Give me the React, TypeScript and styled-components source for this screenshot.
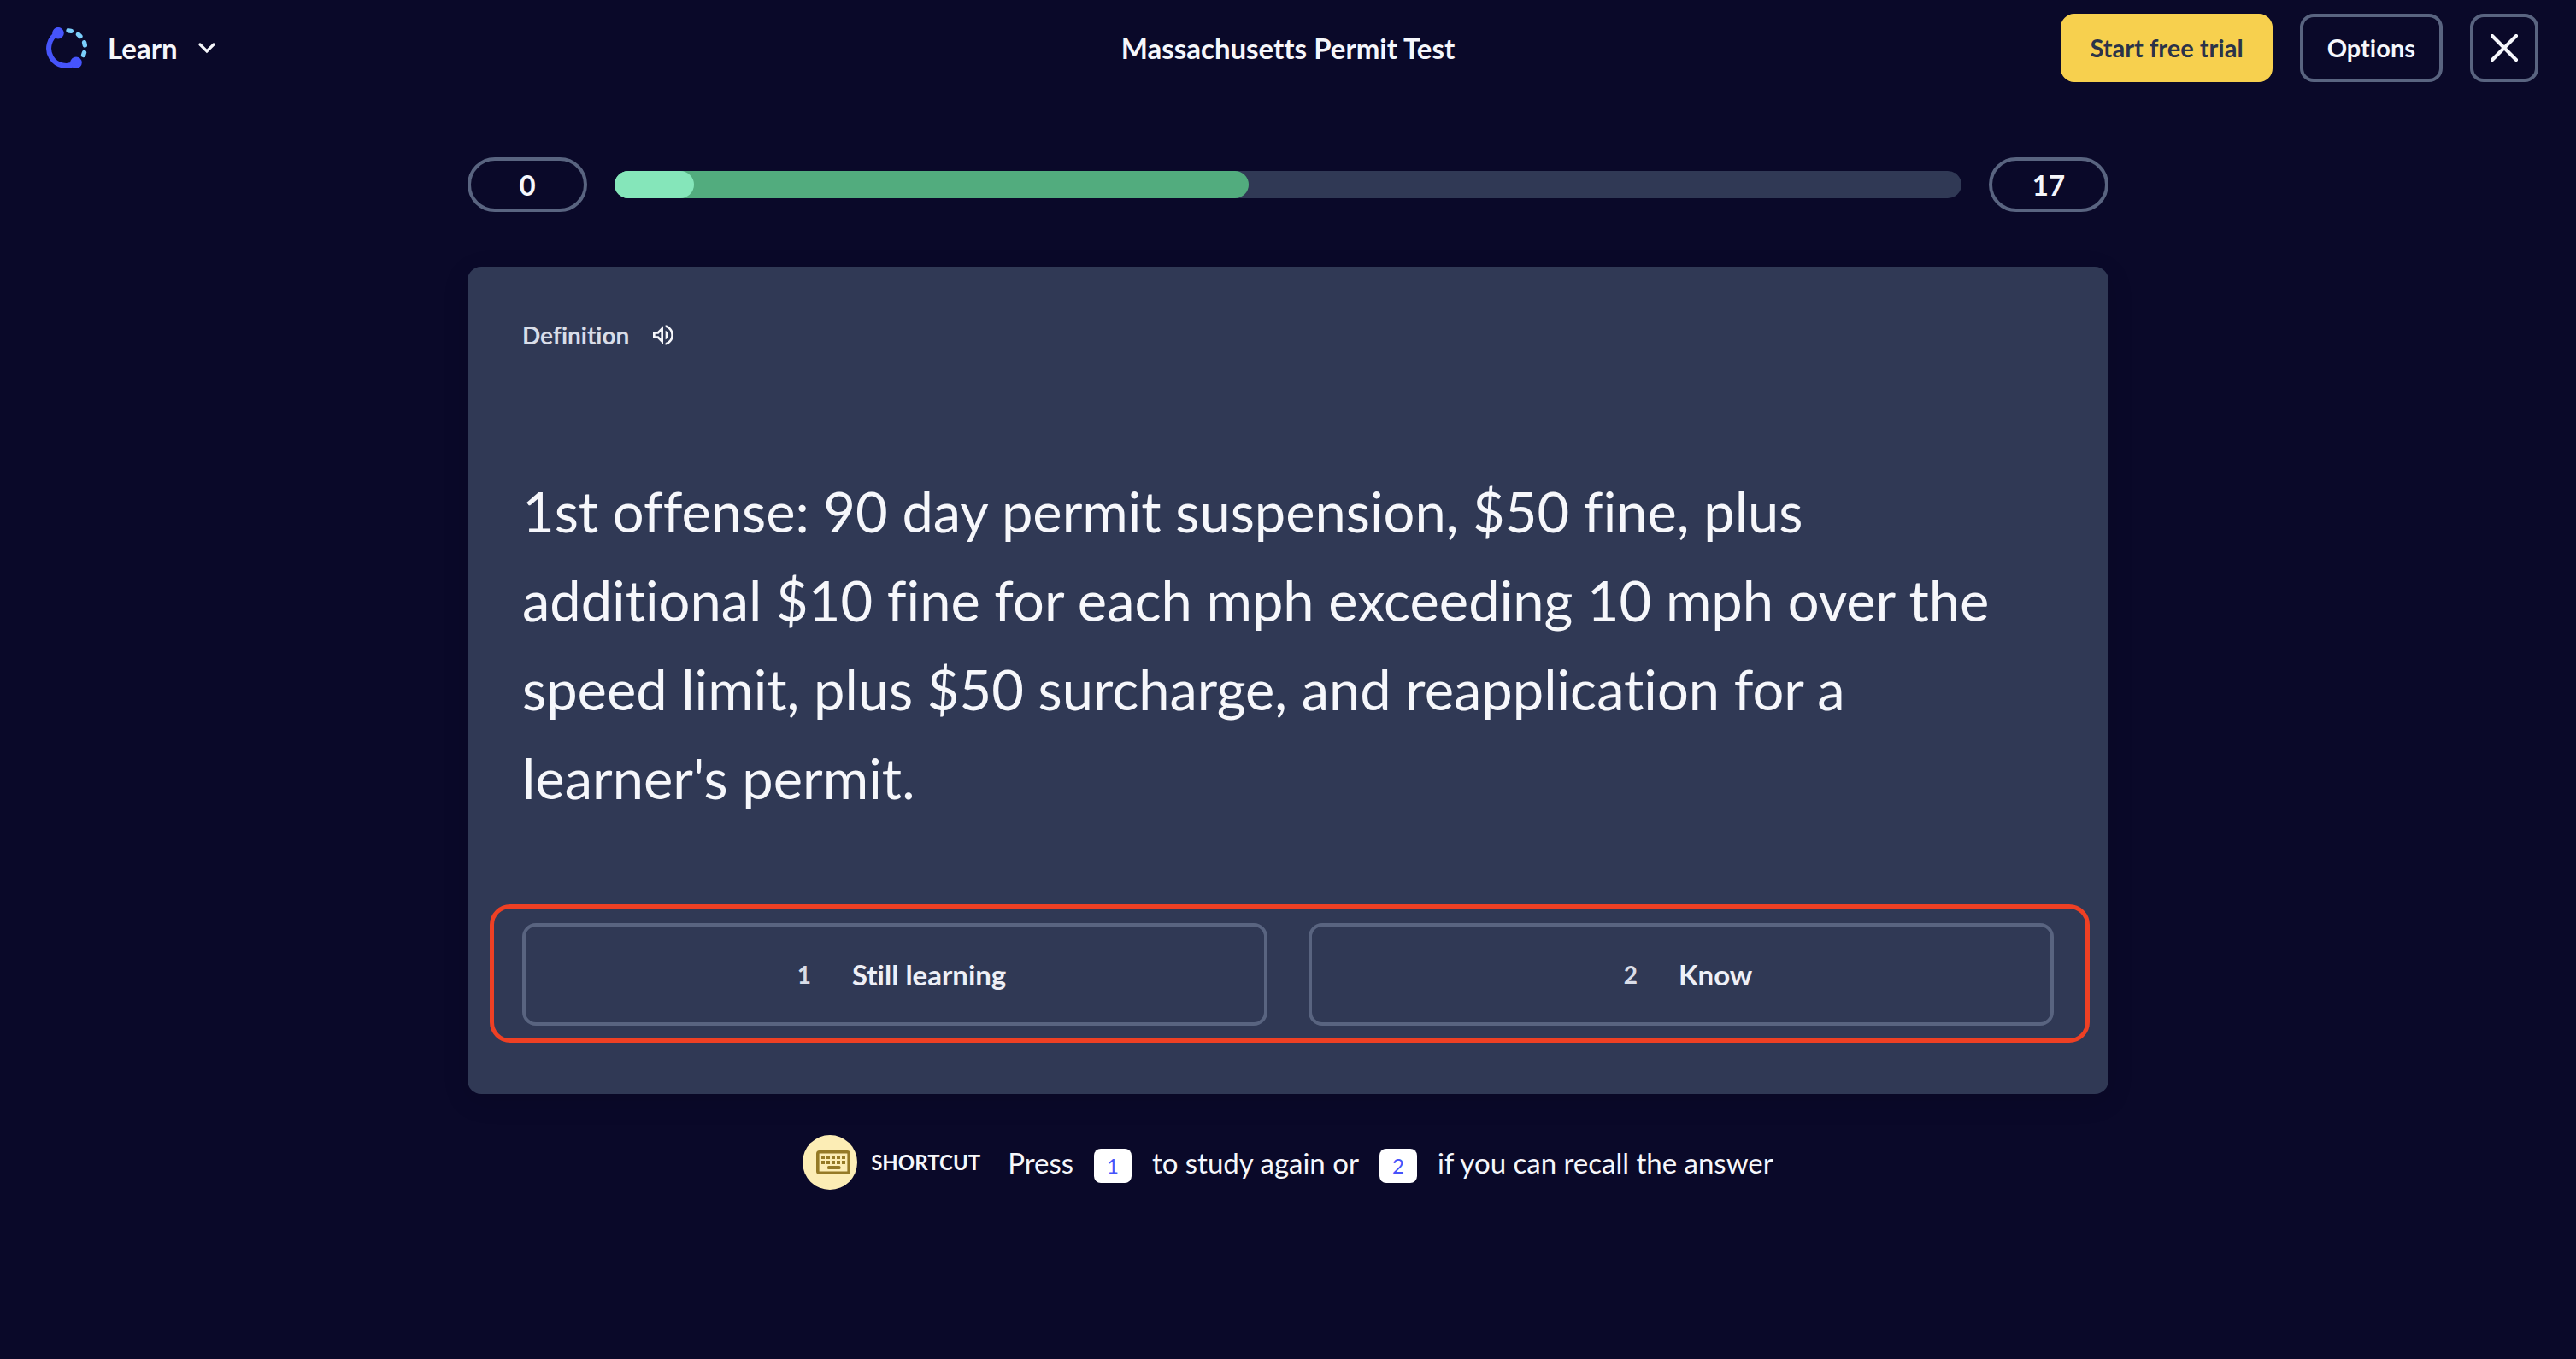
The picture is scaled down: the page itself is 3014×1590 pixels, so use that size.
import React from "react";
import styled, { createGlobalStyle } from "styled-components";

const color = {
  page: "#0a0929",
  panel: "#303955",
  outline: "#596480",
  text: "#f6f7fb",
  textSoft: "#d9dde8",
  yellow: "#f7d04e",
  ink: "#2b3349",
  mint: "#85e6ba",
  green: "#52ac7e",
  indigo: "#4654fb",
  sky: "#7bcffb",
  highlight: "#ee4024",
  sand: "#fcedb5",
  bronze: "#957a26",
};

const GlobalStyle = createGlobalStyle`
  *, *::before, *::after { box-sizing: border-box; }
  body {
    margin: 0;
    background: ${color.page};
    color: ${color.text};
    font-family: Lato, "Liberation Sans", sans-serif;
    font-size: 33px;
    font-variant-ligatures: none;
    line-height: 40px;
  }
  button {
    margin: 0;
    padding: 0;
    border: 0;
    background: none;
    color: inherit;
    font: inherit;
    font-variant-ligatures: none;
    cursor: pointer;
  }
  svg { display: block; flex: none; }
`;

const Page = styled.div`
  display: flex;
  flex-direction: column;
  min-height: 100vh;
`;

const Header = styled.header`
  display: grid;
  grid-template-columns: 1fr auto 1fr;
  align-items: center;
  padding: 16px 44px;
`;

const ModeButton = styled.button`
  display: flex;
  align-items: center;
  justify-self: start;
  gap: 24px;
  padding: 0 10px;
  font-weight: 700;
`;

const Title = styled.h1`
  margin: 0;
  font-size: inherit;
  font-weight: 700;
`;

const Actions = styled.div`
  display: flex;
  justify-self: end;
  gap: 32px;
`;

const ActionButton = styled.button<{ $primary?: boolean }>`
  height: 80px;
  padding: 0 ${(p) => (p.$primary ? 30 : 28)}px;
  border: 4px solid ${(p) => (p.$primary ? color.yellow : color.outline)};
  border-radius: 16px;
  background: ${(p) => (p.$primary ? color.yellow : "transparent")};
  color: ${(p) => (p.$primary ? color.ink : color.text)};
  font-size: 29px;
  font-weight: 700;
`;

const CloseButton = styled(ActionButton)`
  display: grid;
  place-items: center;
  width: 80px;
  padding: 0;
`;

const Main = styled.main`
  width: 100%;
  max-width: 1920px;
  margin: 0 auto;
  padding-top: 72px;
`;

const ProgressRow = styled.div`
  display: flex;
  align-items: center;
  gap: 32px;
`;

const Count = styled.span`
  display: grid;
  place-items: center;
  width: 140px;
  height: 64px;
  border: 4px solid ${color.outline};
  border-radius: 32px;
  font-weight: 700;
`;

const Track = styled.div`
  display: grid;
  flex: 1;
  height: 32px;
  border-radius: 16px;
  background: ${color.panel};
`;

const Fill = styled.div<{ $tone: string }>`
  grid-area: 1 / 1;
  border-radius: 16px;
  background: ${(p) => p.$tone};
`;

const Card = styled.section`
  margin-top: 64px;
  padding: 64px 64px 80px;
  border-radius: 16px;
  background: ${color.panel};
  box-shadow: 0 8px 32px rgba(0, 0, 0, 0.1);
`;

const CardLabel = styled.div`
  display: flex;
  align-items: center;
  gap: 24px;
  height: 32px;
  color: ${color.textSoft};
  font-size: 28px;
  font-weight: 700;
`;

const AudioButton = styled.button`
  color: ${color.text};
`;

const Prompt = styled.p`
  max-width: 1760px;
  margin: 138px 0 118px;
  font-size: 65px;
  line-height: 104px;
`;

const Answers = styled.div`
  position: relative;
  display: grid;
  grid-template-columns: 1fr 1fr;
  gap: 48px;
`;

const Highlight = styled.div`
  position: absolute;
  inset: -22px -42px -20px -38px;
  border: 5px solid ${color.highlight};
  border-radius: 24px;
  pointer-events: none;
`;

const AnswerButton = styled.button`
  display: flex;
  align-items: center;
  justify-content: center;
  gap: 32px;
  height: 120px;
  border: 4px solid ${color.outline};
  border-radius: 16px;
  color: #eeeff6;
  font-weight: 700;
`;

const AnswerKey = styled.span`
  padding: 0 16px;
  color: ${color.textSoft};
  font-size: 28px;
`;

const Shortcut = styled.div`
  display: flex;
  align-items: center;
  justify-content: center;
  margin-top: 48px;
`;

const ShortcutBadge = styled.span`
  display: flex;
  align-items: center;
  justify-content: flex-end;
  width: 64px;
  height: 64px;
  padding-right: 8px;
  border-radius: 50%;
  background: ${color.sand};
`;

const ShortcutName = styled.strong`
  margin: 0 32px 0 16px;
  font-size: 24px;
`;

const ShortcutText = styled.p`
  display: flex;
  align-items: baseline;
  gap: 24px;
  margin: 0;
  padding-top: 4px;
`;

const Key = styled.kbd`
  padding: 4px 15px;
  border-radius: 8px;
  background: #ffffff;
  color: ${color.indigo};
  font-family: inherit;
  font-size: 24px;
  line-height: 32px;
`;

function LearnLogo() {
  return (
    <svg width="48" height="48" viewBox="0 0 48 48" fill="none" strokeLinecap="round" aria-hidden="true">
      <g stroke={color.indigo}>
        <path d="M14 6.7A20.28 20.28 0 1 0 35 41.3" strokeWidth="6" />
        <circle cx="14" cy="6.7" r="4" strokeWidth="5.6" />
        <circle cx="35" cy="41.3" r="4" strokeWidth="5.6" />
      </g>
      <path
        d="M26 3.8l3.3.5M37.5 8.2l2.4 2.3M44.6 17.7l.7 3.2M44.5 29.5l-.9 2.9"
        stroke={color.sky}
        strokeWidth="5.4"
      />
    </svg>
  );
}

function Chevron() {
  return (
    <svg width="24" height="24" viewBox="0 0 24 24" fill="none" aria-hidden="true">
      <path d="M2 8l8 8 8-8" stroke="currentColor" strokeWidth="3.2" strokeLinecap="round" />
    </svg>
  );
}

function Cross() {
  return (
    <svg width="32" height="32" viewBox="0 0 32 32" fill="none" aria-hidden="true">
      <path d="M2 2l28 28M30 2L2 30" stroke="currentColor" strokeWidth="4.2" strokeLinecap="round" />
    </svg>
  );
}

function Speaker() {
  return (
    <svg width="32" height="32" viewBox="0 0 24 24" fill="currentColor" aria-hidden="true">
      <path d="M3 9v6h4l5 5V4L7 9H3zm7-.17v6.34L7.83 13H5v-2h2.83L10 8.83zM16.5 12c0-1.77-1.02-3.29-2.5-4.03v8.05c1.48-.73 2.5-2.25 2.5-4.02zM14 3.23v2.06c2.89.86 5 3.54 5 6.71s-2.11 5.85-5 6.71v2.06c4.01-.91 7-4.49 7-8.77 0-4.28-2.99-7.86-7-8.77z" />
    </svg>
  );
}

function Keyboard() {
  const columns = [6, 12, 18, 24, 30];
  return (
    <svg width="40" height="28" viewBox="0 0 40 28" fill={color.bronze} aria-hidden="true">
      <rect x="1.8" y="1.8" width="36.4" height="24.4" rx="2" fill="none" stroke={color.bronze} strokeWidth="3.6" />
      {columns.map((x) => (
        <React.Fragment key={x}>
          <rect x={x} y="6" width="4" height="4" />
          <rect x={x} y="12" width="4" height="4" />
        </React.Fragment>
      ))}
      <rect x="13" y="18" width="15.5" height="4" rx="1.5" />
    </svg>
  );
}

const TOTAL = 17;
const progress = [
  { tone: color.green, rounds: 8 },
  { tone: color.mint, rounds: 1 },
];

export default function App() {
  return (
    <Page>
      <GlobalStyle />
      <Header>
        <ModeButton type="button">
          <LearnLogo />
          Learn
          <Chevron />
        </ModeButton>
        <Title>Massachusetts Permit Test</Title>
        <Actions>
          <ActionButton type="button" $primary>
            Start free trial
          </ActionButton>
          <ActionButton type="button">Options</ActionButton>
          <CloseButton type="button" aria-label="Close">
            <Cross />
          </CloseButton>
        </Actions>
      </Header>

      <Main>
        <ProgressRow>
          <Count>0</Count>
          <Track role="progressbar" aria-label="Progress" aria-valuemin={0} aria-valuemax={TOTAL} aria-valuenow={0}>
            {progress.map(({ tone, rounds }) => (
              <Fill key={tone} $tone={tone} style={{ width: `${(rounds / TOTAL) * 100}%` }} />
            ))}
          </Track>
          <Count>{TOTAL}</Count>
        </ProgressRow>

        <Card>
          <CardLabel>
            Definition
            <AudioButton type="button" aria-label="Play audio">
              <Speaker />
            </AudioButton>
          </CardLabel>
          <Prompt>
            1st offense: 90 day permit suspension, $50 fine, plus additional $10 fine for each mph
            exceeding 10 mph over the speed limit, plus $50 surcharge, and reapplication for a
            learner's permit.
          </Prompt>
          <Answers>
            <AnswerButton type="button">
              <AnswerKey>1</AnswerKey>
              Still learning
            </AnswerButton>
            <AnswerButton type="button">
              <AnswerKey>2</AnswerKey>
              Know
            </AnswerButton>
            <Highlight />
          </Answers>
        </Card>

        <Shortcut>
          <ShortcutBadge>
            <Keyboard />
          </ShortcutBadge>
          <ShortcutName>SHORTCUT</ShortcutName>
          <ShortcutText>
            <span>Press</span>
            <Key>1</Key>
            <span>to study again or</span>
            <Key>2</Key>
            <span>if you can recall the answer</span>
          </ShortcutText>
        </Shortcut>
      </Main>
    </Page>
  );
}
